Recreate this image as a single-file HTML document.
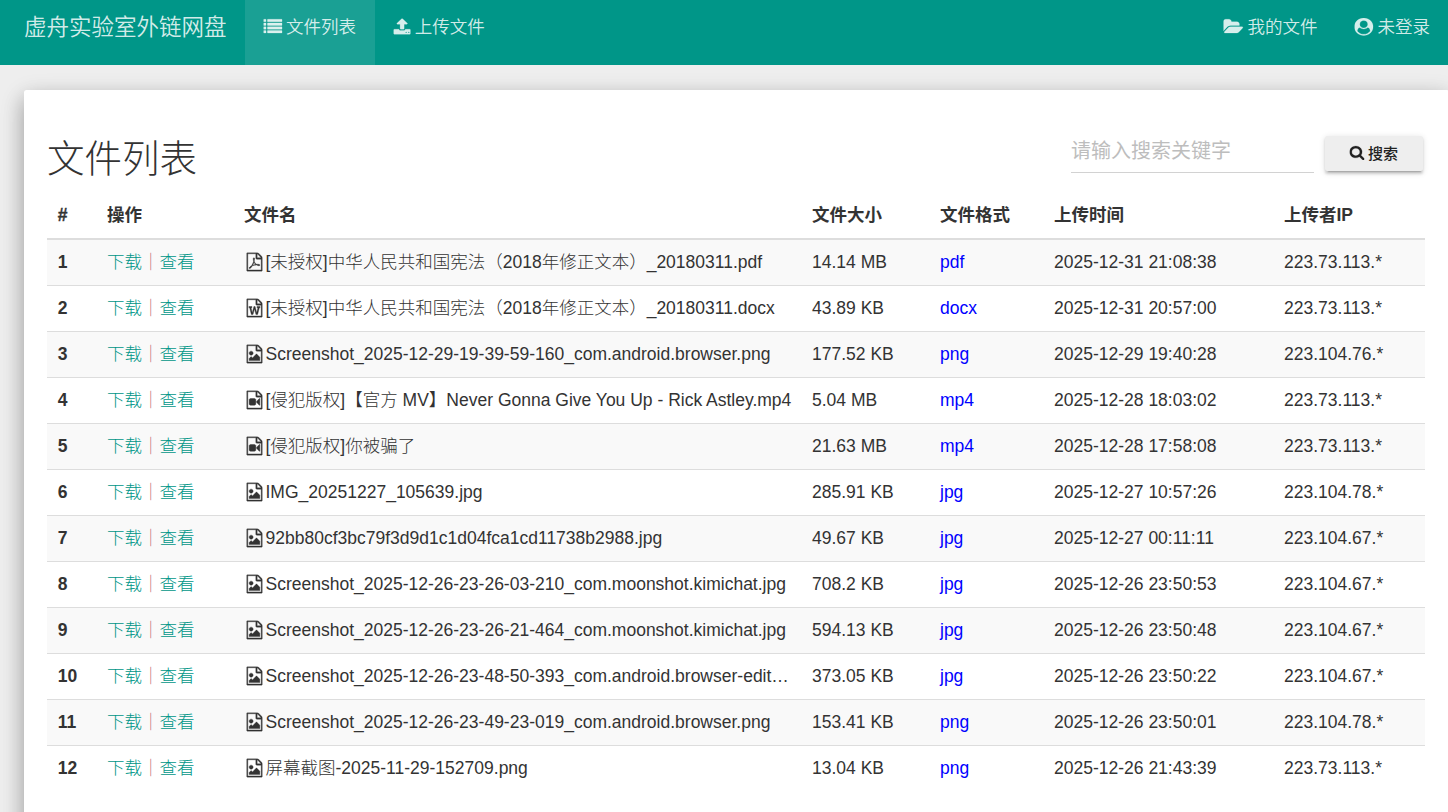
<!DOCTYPE html>
<html lang="zh-CN"><head><meta charset="utf-8"><title>虚舟实验室外链网盘 - 文件列表</title>
<style>
*{box-sizing:border-box}
html,body{margin:0;padding:0}
body{width:1448px;height:812px;overflow:hidden;background:#eee;font-family:"Liberation Sans","Noto Sans CJK SC",sans-serif;font-weight:300;font-size:17.5px;line-height:25px;color:#333;position:relative}
.fa{display:inline-block;height:1em;vertical-align:-0.143em;fill:currentColor}
.navbar{position:absolute;left:0;top:-10px;width:1448px;height:75px;background:#009688;color:rgba(255,255,255,.84)}
.brand{position:absolute;left:5.25px;top:0;height:75px;padding:18.75px;font-size:22.5px;line-height:37.5px;white-space:nowrap}
.nav{list-style:none;margin:0;padding:0;position:absolute;top:0;height:75px;white-space:nowrap;display:flex}
.nav.left{left:245px}
.nav.right{right:-0.75px}
.nav li{display:block;height:75px}
.nav li a{display:block;padding:25px 18.75px 25px;height:75px;line-height:25px}
.nav li.active a{background:rgba(255,255,255,.1)}
.well{position:absolute;left:24px;top:90px;width:1425px;height:800px;background:#fff;padding:23.75px 23.75px 23.75px 23px;border-radius:2.5px;box-shadow:0 10px 21px 0 rgba(0,0,0,.2),0 7.5px 25px 0 rgba(0,0,0,.19)}
h2{margin:25px 0 12.5px;font-size:37.5px;line-height:41.25px;font-weight:300;color:#333}
.search{position:absolute;left:0;top:0}
.inp{position:absolute;left:1047px;top:35px;width:243px;height:48px;border-bottom:1px solid #d2d2d2}
.ph{position:absolute;left:0;top:9.5px;font-size:20px;line-height:32px;color:#bdbdbd;white-space:nowrap;font-weight:400}
.btn{position:absolute;left:1301px;top:46px;width:98px;height:35px;border:0;border-radius:2.5px;background:#eee;color:#222;font-family:inherit;font-size:15px;font-weight:500;line-height:21px;padding:0 0 1px 0;white-space:nowrap;box-shadow:0 2.5px 2.5px 0 rgba(0,0,0,.14),0 3.75px 1.25px -2.5px rgba(0,0,0,.2),0 1.25px 6.25px 0 rgba(0,0,0,.12)}
table{border-collapse:collapse;table-layout:fixed;width:1378px;border-spacing:0}
th,td{padding:10px;text-align:left;line-height:25px;height:45px;white-space:nowrap;vertical-align:top}
th{font-weight:bold}
thead th{border-bottom:2.5px solid #ddd}
tbody td,tbody th{border-top:1px solid #ddd}
tbody tr:nth-child(odd){background:#f9f9f9}
.lk{color:#009688}
.sep{color:#c4707a}
.fmt{color:#00f}
.fn{width:548px;overflow:hidden;text-overflow:ellipsis;white-space:nowrap}
.tag{color:#555}
.fw{display:inline-block;width:22.5px;text-align:center;margin-left:-1px}
tr>:first-child{padding-left:10.75px}
.fa path{stroke:currentColor;stroke-width:24}
.btn .fa{vertical-align:-1.2px}
.fa{transform:scaleX(1.07)}
.navbar{font-weight:350}
.fw .fa path{stroke-width:36}
.fw .fa{transform:scale(1.07,1.08) translateY(0.1px)}
thead th:first-child{-webkit-text-stroke:0.35px #333}

</style></head><body>
<div class="navbar">
<a class="brand">虚舟实验室外链网盘</a>
<ul class="nav left"><li class="active"><a><svg class="fa" style="width:1.0000em;" viewBox="0 -1536 1792 1792" aria-hidden="true"><path transform="scale(1,-1)" d="M256 224v-192q0 -13 -9.5 -22.5t-22.5 -9.5h-192q-13 0 -22.5 9.5t-9.5 22.5v192q0 13 9.5 22.5t22.5 9.5h192q13 0 22.5 -9.5t9.5 -22.5zM256 608v-192q0 -13 -9.5 -22.5t-22.5 -9.5h-192q-13 0 -22.5 9.5t-9.5 22.5v192q0 13 9.5 22.5t22.5 9.5h192q13 0 22.5 -9.5 t9.5 -22.5zM256 992v-192q0 -13 -9.5 -22.5t-22.5 -9.5h-192q-13 0 -22.5 9.5t-9.5 22.5v192q0 13 9.5 22.5t22.5 9.5h192q13 0 22.5 -9.5t9.5 -22.5zM1792 224v-192q0 -13 -9.5 -22.5t-22.5 -9.5h-1344q-13 0 -22.5 9.5t-9.5 22.5v192q0 13 9.5 22.5t22.5 9.5h1344 q13 0 22.5 -9.5t9.5 -22.5zM256 1376v-192q0 -13 -9.5 -22.5t-22.5 -9.5h-192q-13 0 -22.5 9.5t-9.5 22.5v192q0 13 9.5 22.5t22.5 9.5h192q13 0 22.5 -9.5t9.5 -22.5zM1792 608v-192q0 -13 -9.5 -22.5t-22.5 -9.5h-1344q-13 0 -22.5 9.5t-9.5 22.5v192q0 13 9.5 22.5 t22.5 9.5h1344q13 0 22.5 -9.5t9.5 -22.5zM1792 992v-192q0 -13 -9.5 -22.5t-22.5 -9.5h-1344q-13 0 -22.5 9.5t-9.5 22.5v192q0 13 9.5 22.5t22.5 9.5h1344q13 0 22.5 -9.5t9.5 -22.5zM1792 1376v-192q0 -13 -9.5 -22.5t-22.5 -9.5h-1344q-13 0 -22.5 9.5t-9.5 22.5v192 q0 13 9.5 22.5t22.5 9.5h1344q13 0 22.5 -9.5t9.5 -22.5z"/></svg> 文件列表</a></li><li><a><svg class="fa" style="width:0.9286em;" viewBox="0 -1536 1664 1792" aria-hidden="true"><path transform="scale(1,-1)" d="M1280 64q0 26 -19 45t-45 19t-45 -19t-19 -45t19 -45t45 -19t45 19t19 45zM1536 64q0 26 -19 45t-45 19t-45 -19t-19 -45t19 -45t45 -19t45 19t19 45zM1664 288v-320q0 -40 -28 -68t-68 -28h-1472q-40 0 -68 28t-28 68v320q0 40 28 68t68 28h427q21 -56 70.5 -92 t110.5 -36h256q61 0 110.5 36t70.5 92h427q40 0 68 -28t28 -68zM1339 936q-17 -40 -59 -40h-256v-448q0 -26 -19 -45t-45 -19h-256q-26 0 -45 19t-19 45v448h-256q-42 0 -59 40q-17 39 14 69l448 448q18 19 45 19t45 -19l448 -448q31 -30 14 -69z"/></svg> 上传文件</a></li></ul>
<ul class="nav right"><li><a><svg class="fa" style="width:1.0714em;" viewBox="0 -1536 1920 1792" aria-hidden="true"><path transform="scale(1,-1)" d="M1879 584q0 -31 -31 -66l-336 -396q-43 -51 -120.5 -86.5t-143.5 -35.5h-1088q-34 0 -60.5 13t-26.5 43q0 31 31 66l336 396q43 51 120.5 86.5t143.5 35.5h1088q34 0 60.5 -13t26.5 -43zM1536 928v-160h-832q-94 0 -197 -47.5t-164 -119.5l-337 -396l-5 -6q0 4 -0.5 12.5 t-0.5 12.5v960q0 92 66 158t158 66h320q92 0 158 -66t66 -158v-32h544q92 0 158 -66t66 -158z"/></svg> 我的文件</a></li><li><a><svg class="fa" style="width:1.0000em;" viewBox="0 -1536 1792 1792" aria-hidden="true"><path transform="scale(1,-1)" d="M1523 197q-22 155 -87.5 257.5t-184.5 118.5q-67 -74 -159.5 -115.5t-195.5 -41.5t-195.5 41.5t-159.5 115.5q-119 -16 -184.5 -118.5t-87.5 -257.5q106 -150 271 -237.5t356 -87.5t356 87.5t271 237.5zM1280 896q0 159 -112.5 271.5t-271.5 112.5t-271.5 -112.5 t-112.5 -271.5t112.5 -271.5t271.5 -112.5t271.5 112.5t112.5 271.5zM1792 640q0 -182 -71 -347.5t-190.5 -286t-285.5 -191.5t-349 -71q-182 0 -348 71t-286 191t-191 286t-71 348t71 348t191 286t286 191t348 71t348 -71t286 -191t191 -286t71 -348z"/></svg> 未登录</a></li></ul>
</div>
<div class="well">
<div class="search"><div class="inp"><span class="ph">请输入搜索关键字</span></div><button class="btn"><svg class="fa" style="width:0.9286em;" viewBox="0 -1536 1664 1792" aria-hidden="true"><path transform="scale(1,-1)" d="M1152 704q0 185 -131.5 316.5t-316.5 131.5t-316.5 -131.5t-131.5 -316.5t131.5 -316.5t316.5 -131.5t316.5 131.5t131.5 316.5zM1664 -128q0 -52 -38 -90t-90 -38q-54 0 -90 38l-343 342q-179 -124 -399 -124q-143 0 -273.5 55.5t-225 150t-150 225t-55.5 273.5 t55.5 273.5t150 225t225 150t273.5 55.5t273.5 -55.5t225 -150t150 -225t55.5 -273.5q0 -220 -124 -399l343 -343q37 -37 37 -90z"/></svg> 搜索</button></div>
<h2>文件列表</h2>
<table>
<colgroup><col style="width:50px"><col style="width:137px"><col style="width:568px"><col style="width:128px"><col style="width:114px"><col style="width:230px"><col style="width:151px"></colgroup>
<thead><tr><th>#</th><th>操作</th><th>文件名</th><th>文件大小</th><th>文件格式</th><th>上传时间</th><th>上传者IP</th></tr></thead>
<tbody>
<tr><th>1</th><td><a class="lk">下载</a><span class="sep">｜</span><a class="lk">查看</a></td><td><div class="fn"><span class="fw"><svg class="fa" style="width:0.8571em;" viewBox="0 -1536 1536 1792" aria-hidden="true"><path transform="scale(1,-1)" d="M1468 1156q28 -28 48 -76t20 -88v-1152q0 -40 -28 -68t-68 -28h-1344q-40 0 -68 28t-28 68v1600q0 40 28 68t68 28h896q40 0 88 -20t76 -48zM1024 1400v-376h376q-10 29 -22 41l-313 313q-12 12 -41 22zM1408 -128v1024h-416q-40 0 -68 28t-28 68v416h-768v-1536h1280z M894 465q33 -26 84 -56q59 7 117 7q147 0 177 -49q16 -22 2 -52q0 -1 -1 -2l-2 -2v-1q-6 -38 -71 -38q-48 0 -115 20t-130 53q-221 -24 -392 -83q-153 -262 -242 -262q-15 0 -28 7l-24 12q-1 1 -6 5q-10 10 -6 36q9 40 56 91.5t132 96.5q14 9 23 -6q2 -2 2 -4q52 85 107 197 q68 136 104 262q-24 82 -30.5 159.5t6.5 127.5q11 40 42 40h21h1q23 0 35 -15q18 -21 9 -68q-2 -6 -4 -8q1 -3 1 -8v-30q-2 -123 -14 -192q55 -164 146 -238zM318 54q52 24 137 158q-51 -40 -87.5 -84t-49.5 -74zM716 974q-15 -42 -2 -132q1 7 7 44q0 3 7 43q1 4 4 8 q-1 1 -1 2q-1 2 -1 3q-1 22 -13 36q0 -1 -1 -2v-2zM592 313q135 54 284 81q-2 1 -13 9.5t-16 13.5q-76 67 -127 176q-27 -86 -83 -197q-30 -56 -45 -83zM1238 329q-24 24 -140 24q76 -28 124 -28q14 0 18 1q0 1 -2 3z"/></svg></span>[未授权]中华人民共和国宪法（2018年修正文本）_20180311.pdf</div></td><td>14.14 MB</td><td><span class="fmt">pdf</span></td><td>2025-12-31 21:08:38</td><td>223.73.113.*</td></tr>
<tr><th>2</th><td><a class="lk">下载</a><span class="sep">｜</span><a class="lk">查看</a></td><td><div class="fn"><span class="fw"><svg class="fa" style="width:0.8571em;" viewBox="0 -1536 1536 1792" aria-hidden="true"><path transform="scale(1,-1)" d="M1468 1156q28 -28 48 -76t20 -88v-1152q0 -40 -28 -68t-68 -28h-1344q-40 0 -68 28t-28 68v1600q0 40 28 68t68 28h896q40 0 88 -20t76 -48zM1024 1400v-376h376q-10 29 -22 41l-313 313q-12 12 -41 22zM1408 -128v1024h-416q-40 0 -68 28t-28 68v416h-768v-1536h1280z M233 768v-107h70l164 -661h159l128 485q7 20 10 46q2 16 2 24h4l3 -24q1 -3 3.5 -20t5.5 -26l128 -485h159l164 661h70v107h-300v-107h90l-99 -438q-5 -20 -7 -46l-2 -21h-4q0 3 -0.5 6.5t-1.5 8t-1 6.5q-1 5 -4 21t-5 25l-144 545h-114l-144 -545q-2 -9 -4.5 -24.5 t-3.5 -21.5l-4 -21h-4l-2 21q-2 26 -7 46l-99 438h90v107h-300z"/></svg></span>[未授权]中华人民共和国宪法（2018年修正文本）_20180311.docx</div></td><td>43.89 KB</td><td><span class="fmt">docx</span></td><td>2025-12-31 20:57:00</td><td>223.73.113.*</td></tr>
<tr><th>3</th><td><a class="lk">下载</a><span class="sep">｜</span><a class="lk">查看</a></td><td><div class="fn"><span class="fw"><svg class="fa" style="width:0.8571em;" viewBox="0 -1536 1536 1792" aria-hidden="true"><path transform="scale(1,-1)" d="M1468 1156q28 -28 48 -76t20 -88v-1152q0 -40 -28 -68t-68 -28h-1344q-40 0 -68 28t-28 68v1600q0 40 28 68t68 28h896q40 0 88 -20t76 -48zM1024 1400v-376h376q-10 29 -22 41l-313 313q-12 12 -41 22zM1408 -128v1024h-416q-40 0 -68 28t-28 68v416h-768v-1536h1280z M1280 320v-320h-1024v192l192 192l128 -128l384 384zM448 512q-80 0 -136 56t-56 136t56 136t136 56t136 -56t56 -136t-56 -136t-136 -56z"/></svg></span>Screenshot_2025-12-29-19-39-59-160_com.android.browser.png</div></td><td>177.52 KB</td><td><span class="fmt">png</span></td><td>2025-12-29 19:40:28</td><td>223.104.76.*</td></tr>
<tr><th>4</th><td><a class="lk">下载</a><span class="sep">｜</span><a class="lk">查看</a></td><td><div class="fn"><span class="fw"><svg class="fa" style="width:0.8571em;" viewBox="0 -1536 1536 1792" aria-hidden="true"><path transform="scale(1,-1)" d="M1468 1156q28 -28 48 -76t20 -88v-1152q0 -40 -28 -68t-68 -28h-1344q-40 0 -68 28t-28 68v1600q0 40 28 68t68 28h896q40 0 88 -20t76 -48zM1024 1400v-376h376q-10 29 -22 41l-313 313q-12 12 -41 22zM1408 -128v1024h-416q-40 0 -68 28t-28 68v416h-768v-1536h1280z M768 768q52 0 90 -38t38 -90v-384q0 -52 -38 -90t-90 -38h-384q-52 0 -90 38t-38 90v384q0 52 38 90t90 38h384zM1260 766q20 -8 20 -30v-576q0 -22 -20 -30q-8 -2 -12 -2q-14 0 -23 9l-265 266v90l265 266q9 9 23 9q4 0 12 -2z"/></svg></span>[侵犯版权]【官方 MV】Never Gonna Give You Up - Rick Astley.mp4</div></td><td>5.04 MB</td><td><span class="fmt">mp4</span></td><td>2025-12-28 18:03:02</td><td>223.73.113.*</td></tr>
<tr><th>5</th><td><a class="lk">下载</a><span class="sep">｜</span><a class="lk">查看</a></td><td><div class="fn"><span class="fw"><svg class="fa" style="width:0.8571em;" viewBox="0 -1536 1536 1792" aria-hidden="true"><path transform="scale(1,-1)" d="M1468 1156q28 -28 48 -76t20 -88v-1152q0 -40 -28 -68t-68 -28h-1344q-40 0 -68 28t-28 68v1600q0 40 28 68t68 28h896q40 0 88 -20t76 -48zM1024 1400v-376h376q-10 29 -22 41l-313 313q-12 12 -41 22zM1408 -128v1024h-416q-40 0 -68 28t-28 68v416h-768v-1536h1280z M768 768q52 0 90 -38t38 -90v-384q0 -52 -38 -90t-90 -38h-384q-52 0 -90 38t-38 90v384q0 52 38 90t90 38h384zM1260 766q20 -8 20 -30v-576q0 -22 -20 -30q-8 -2 -12 -2q-14 0 -23 9l-265 266v90l265 266q9 9 23 9q4 0 12 -2z"/></svg></span>[侵犯版权]你被骗了</div></td><td>21.63 MB</td><td><span class="fmt">mp4</span></td><td>2025-12-28 17:58:08</td><td>223.73.113.*</td></tr>
<tr><th>6</th><td><a class="lk">下载</a><span class="sep">｜</span><a class="lk">查看</a></td><td><div class="fn"><span class="fw"><svg class="fa" style="width:0.8571em;" viewBox="0 -1536 1536 1792" aria-hidden="true"><path transform="scale(1,-1)" d="M1468 1156q28 -28 48 -76t20 -88v-1152q0 -40 -28 -68t-68 -28h-1344q-40 0 -68 28t-28 68v1600q0 40 28 68t68 28h896q40 0 88 -20t76 -48zM1024 1400v-376h376q-10 29 -22 41l-313 313q-12 12 -41 22zM1408 -128v1024h-416q-40 0 -68 28t-28 68v416h-768v-1536h1280z M1280 320v-320h-1024v192l192 192l128 -128l384 384zM448 512q-80 0 -136 56t-56 136t56 136t136 56t136 -56t56 -136t-56 -136t-136 -56z"/></svg></span>IMG_20251227_105639.jpg</div></td><td>285.91 KB</td><td><span class="fmt">jpg</span></td><td>2025-12-27 10:57:26</td><td>223.104.78.*</td></tr>
<tr><th>7</th><td><a class="lk">下载</a><span class="sep">｜</span><a class="lk">查看</a></td><td><div class="fn"><span class="fw"><svg class="fa" style="width:0.8571em;" viewBox="0 -1536 1536 1792" aria-hidden="true"><path transform="scale(1,-1)" d="M1468 1156q28 -28 48 -76t20 -88v-1152q0 -40 -28 -68t-68 -28h-1344q-40 0 -68 28t-28 68v1600q0 40 28 68t68 28h896q40 0 88 -20t76 -48zM1024 1400v-376h376q-10 29 -22 41l-313 313q-12 12 -41 22zM1408 -128v1024h-416q-40 0 -68 28t-28 68v416h-768v-1536h1280z M1280 320v-320h-1024v192l192 192l128 -128l384 384zM448 512q-80 0 -136 56t-56 136t56 136t136 56t136 -56t56 -136t-56 -136t-136 -56z"/></svg></span>92bb80cf3bc79f3d9d1c1d04fca1cd11738b2988.jpg</div></td><td>49.67 KB</td><td><span class="fmt">jpg</span></td><td>2025-12-27 00:11:11</td><td>223.104.67.*</td></tr>
<tr><th>8</th><td><a class="lk">下载</a><span class="sep">｜</span><a class="lk">查看</a></td><td><div class="fn"><span class="fw"><svg class="fa" style="width:0.8571em;" viewBox="0 -1536 1536 1792" aria-hidden="true"><path transform="scale(1,-1)" d="M1468 1156q28 -28 48 -76t20 -88v-1152q0 -40 -28 -68t-68 -28h-1344q-40 0 -68 28t-28 68v1600q0 40 28 68t68 28h896q40 0 88 -20t76 -48zM1024 1400v-376h376q-10 29 -22 41l-313 313q-12 12 -41 22zM1408 -128v1024h-416q-40 0 -68 28t-28 68v416h-768v-1536h1280z M1280 320v-320h-1024v192l192 192l128 -128l384 384zM448 512q-80 0 -136 56t-56 136t56 136t136 56t136 -56t56 -136t-56 -136t-136 -56z"/></svg></span>Screenshot_2025-12-26-23-26-03-210_com.moonshot.kimichat.jpg</div></td><td>708.2 KB</td><td><span class="fmt">jpg</span></td><td>2025-12-26 23:50:53</td><td>223.104.67.*</td></tr>
<tr><th>9</th><td><a class="lk">下载</a><span class="sep">｜</span><a class="lk">查看</a></td><td><div class="fn"><span class="fw"><svg class="fa" style="width:0.8571em;" viewBox="0 -1536 1536 1792" aria-hidden="true"><path transform="scale(1,-1)" d="M1468 1156q28 -28 48 -76t20 -88v-1152q0 -40 -28 -68t-68 -28h-1344q-40 0 -68 28t-28 68v1600q0 40 28 68t68 28h896q40 0 88 -20t76 -48zM1024 1400v-376h376q-10 29 -22 41l-313 313q-12 12 -41 22zM1408 -128v1024h-416q-40 0 -68 28t-28 68v416h-768v-1536h1280z M1280 320v-320h-1024v192l192 192l128 -128l384 384zM448 512q-80 0 -136 56t-56 136t56 136t136 56t136 -56t56 -136t-56 -136t-136 -56z"/></svg></span>Screenshot_2025-12-26-23-26-21-464_com.moonshot.kimichat.jpg</div></td><td>594.13 KB</td><td><span class="fmt">jpg</span></td><td>2025-12-26 23:50:48</td><td>223.104.67.*</td></tr>
<tr><th>10</th><td><a class="lk">下载</a><span class="sep">｜</span><a class="lk">查看</a></td><td><div class="fn"><span class="fw"><svg class="fa" style="width:0.8571em;" viewBox="0 -1536 1536 1792" aria-hidden="true"><path transform="scale(1,-1)" d="M1468 1156q28 -28 48 -76t20 -88v-1152q0 -40 -28 -68t-68 -28h-1344q-40 0 -68 28t-28 68v1600q0 40 28 68t68 28h896q40 0 88 -20t76 -48zM1024 1400v-376h376q-10 29 -22 41l-313 313q-12 12 -41 22zM1408 -128v1024h-416q-40 0 -68 28t-28 68v416h-768v-1536h1280z M1280 320v-320h-1024v192l192 192l128 -128l384 384zM448 512q-80 0 -136 56t-56 136t56 136t136 56t136 -56t56 -136t-56 -136t-136 -56z"/></svg></span>Screenshot_2025-12-26-23-48-50-393_com.android.browser-edit.jpg</div></td><td>373.05 KB</td><td><span class="fmt">jpg</span></td><td>2025-12-26 23:50:22</td><td>223.104.67.*</td></tr>
<tr><th>11</th><td><a class="lk">下载</a><span class="sep">｜</span><a class="lk">查看</a></td><td><div class="fn"><span class="fw"><svg class="fa" style="width:0.8571em;" viewBox="0 -1536 1536 1792" aria-hidden="true"><path transform="scale(1,-1)" d="M1468 1156q28 -28 48 -76t20 -88v-1152q0 -40 -28 -68t-68 -28h-1344q-40 0 -68 28t-28 68v1600q0 40 28 68t68 28h896q40 0 88 -20t76 -48zM1024 1400v-376h376q-10 29 -22 41l-313 313q-12 12 -41 22zM1408 -128v1024h-416q-40 0 -68 28t-28 68v416h-768v-1536h1280z M1280 320v-320h-1024v192l192 192l128 -128l384 384zM448 512q-80 0 -136 56t-56 136t56 136t136 56t136 -56t56 -136t-56 -136t-136 -56z"/></svg></span>Screenshot_2025-12-26-23-49-23-019_com.android.browser.png</div></td><td>153.41 KB</td><td><span class="fmt">png</span></td><td>2025-12-26 23:50:01</td><td>223.104.78.*</td></tr>
<tr><th>12</th><td><a class="lk">下载</a><span class="sep">｜</span><a class="lk">查看</a></td><td><div class="fn"><span class="fw"><svg class="fa" style="width:0.8571em;" viewBox="0 -1536 1536 1792" aria-hidden="true"><path transform="scale(1,-1)" d="M1468 1156q28 -28 48 -76t20 -88v-1152q0 -40 -28 -68t-68 -28h-1344q-40 0 -68 28t-28 68v1600q0 40 28 68t68 28h896q40 0 88 -20t76 -48zM1024 1400v-376h376q-10 29 -22 41l-313 313q-12 12 -41 22zM1408 -128v1024h-416q-40 0 -68 28t-28 68v416h-768v-1536h1280z M1280 320v-320h-1024v192l192 192l128 -128l384 384zM448 512q-80 0 -136 56t-56 136t56 136t136 56t136 -56t56 -136t-56 -136t-136 -56z"/></svg></span>屏幕截图-2025-11-29-152709.png</div></td><td>13.04 KB</td><td><span class="fmt">png</span></td><td>2025-12-26 21:43:39</td><td>223.73.113.*</td></tr>
</tbody></table>
</div>
</body></html>
